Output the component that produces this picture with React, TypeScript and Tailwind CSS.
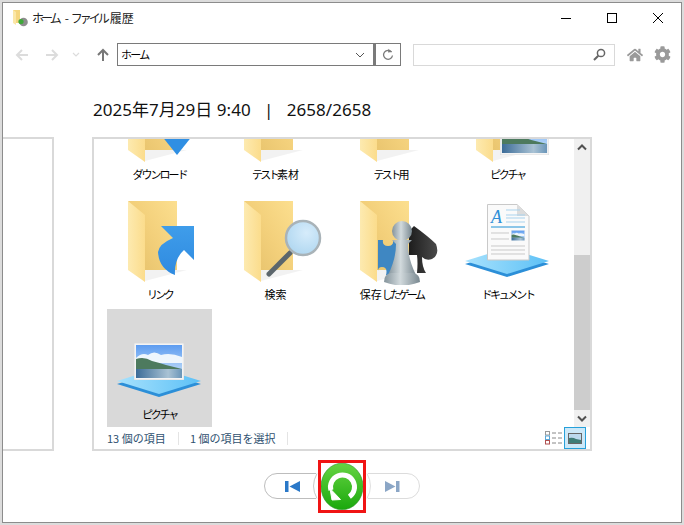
import React from "react";
import { FaHome, FaCog } from "react-icons/fa";

const jp = "font-['Noto_Sans_CJK_JP','Noto_Sans',sans-serif]";

function Defs() {
  return (
    <defs>
      <linearGradient id="back" x1="0" y1="1" x2="1" y2="0">
        <stop offset="0" stopColor="#e2bd66" />
        <stop offset="0.55" stopColor="#f3d07b" />
        <stop offset="1" stopColor="#fcdf8f" />
      </linearGradient>
      <linearGradient id="flap" x1="0" y1="0" x2="1" y2="0">
        <stop offset="0" stopColor="#fdeab0" />
        <stop offset="1" stopColor="#fbdc8c" />
      </linearGradient>
      <linearGradient id="blue" x1="0" y1="0" x2="0" y2="1">
        <stop offset="0" stopColor="#3f9dea" />
        <stop offset="1" stopColor="#2f8ae0" />
      </linearGradient>
      <linearGradient id="plat" x1="0" y1="0" x2="1" y2="0">
        <stop offset="0" stopColor="#a8e2fd" />
        <stop offset="1" stopColor="#5cc0f6" />
      </linearGradient>
      <linearGradient id="sky" x1="0" y1="0" x2="0" y2="1">
        <stop offset="0" stopColor="#5d9cf0" />
        <stop offset="1" stopColor="#cfe6fa" />
      </linearGradient>
      <linearGradient id="lake" x1="0" y1="0" x2="1" y2="0">
        <stop offset="0" stopColor="#3c6c98" />
        <stop offset="0.7" stopColor="#a9c2d4" />
        <stop offset="1" stopColor="#6a95b8" />
      </linearGradient>
      <linearGradient id="chess" x1="0" y1="0" x2="1" y2="0">
        <stop offset="0" stopColor="#84939b" />
        <stop offset="0.45" stopColor="#d2dadd" />
        <stop offset="1" stopColor="#78878f" />
      </linearGradient>
      <linearGradient id="spade" x1="0" y1="0" x2="1" y2="0">
        <stop offset="0" stopColor="#1d1d1d" />
        <stop offset="1" stopColor="#4a4a4a" />
      </linearGradient>
      <radialGradient id="lens" cx="0.6" cy="0.35" r="0.8">
        <stop offset="0" stopColor="#d6ecfb" />
        <stop offset="1" stopColor="#a9d3ee" />
      </radialGradient>
    </defs>
  );
}

function Folder() {
  return (
    <>
      <path d="M38 81 L80 81 L38 92 Z" fill="#000" opacity="0.05" />
      <path d="M21 12 H70 V81 H38 V93 Z" fill="url(#back)" />
      <path d="M21 12 L38 26 V93 L21 81 Z" fill="url(#flap)" />
    </>
  );
}

function Photo({ x, y, w, h }: { x: number; y: number; w: number; h: number }) {
  return (
    <svg x={x} y={y} width={w} height={h} viewBox="0 0 50 37" preserveAspectRatio="none">
      <rect width="50" height="37" fill="#f4f4f4" stroke="#d0d0d0" strokeWidth="0.6" />
      <rect x="2" y="2" width="46" height="33" fill="url(#sky)" />
      <path d="M2 15 Q8 9 14 12 Q20 7 27 12 Q36 9 48 14 V20 H2 Z" fill="#eef6fd" />
      <path d="M2 16 Q10 13 18 18 Q26 20 32 22 L48 26 H2 Z" fill="#4d7a5e" />
      <rect x="2" y="26" width="46" height="9" fill="url(#lake)" />
    </svg>
  );
}

function Platform() {
  const d = "M10 72 L52 59 L94 72 L52 85 Z";
  return (
    <>
      <path d={d} transform="translate(0 3)" fill="#2c8fd8" />
      <path d={d} fill="url(#plat)" />
    </>
  );
}

const icons: Record<string, React.ReactNode> = {
  download: (
    <>
      <Folder />
      <path d="M54 66 H86 L70 86 Z" fill="#2f8fe3" />
    </>
  ),
  plain: <Folder />,
  picFolder: (
    <>
      <Folder />
      <Photo x={45} y={49} w={49} h={37} />
    </>
  ),
  link: (
    <>
      <Folder />
      <path d="M54 37 H87 V71 L77 61 Q67 70 68 86 Q52 80 51 63 Q52 55 66 49 Z" fill="url(#blue)" />
    </>
  ),
  search: (
    <>
      <Folder />
      <line x1="67" y1="64" x2="46" y2="85" stroke="#5c666c" strokeWidth="5" strokeLinecap="round" />
      <circle cx="80" cy="49" r="17" fill="url(#lens)" stroke="#a9b3b8" strokeWidth="2.5" />
    </>
  ),
  game: (
    <>
      <Folder />
      <path d="M39 51 H44 Q43 57 49 57 Q55 57 54 51 H60 V86 H47 Q49 78 43 78 Q39 78 39 82 Z" fill="#3f87c2" />
      <path d="M75 37 Q90 48 97 55 Q101 66 93 70 Q87 72 83 68 Q83 78 87 84 L78 84 Q79 74 78 66 L70 66 V42 Z" fill="url(#spade)" />
      <circle cx="63" cy="42" r="10" fill="url(#chess)" />
      <path d="M53 51 H73 L69 55 Q69 70 77 86 H49 Q57 70 57 55 Z" fill="url(#chess)" />
      <path d="M45 93 Q45 85 52 84 H74 Q81 85 81 93 Q63 100 45 93 Z" fill="url(#chess)" />
    </>
  ),
  doc: (
    <>
      <Platform />
      <path d="M32.5 15.5 H62 L74 27 V71 H32.5 Z" fill="#fafafa" stroke="#c9c9c9" />
      <path d="M62 15.5 V27 H74 Z" fill="#dcdcdc" />
      <text x="36" y="34" fontSize="18" fontStyle="italic" fontFamily="Liberation Serif" fill="#2f8fd8">A</text>
      <path d="M51 21 H65 M51 26 H70 M51 29 H70 M51 33 H70" stroke="#a9d3ee" strokeWidth="1" />
      <rect x="36" y="37" width="34" height="2" fill="#8cc6e8" />
      <path d="M36 44 H54 M36 50 H54 M36 57 H70 M36 61 H70 M36 65 H70" stroke="#c9c9c9" strokeWidth="1" />
      <Photo x={56} y={41} w={14} h={11} />
    </>
  ),
  pic: (
    <>
      <Platform />
      <Photo x={27} y={34} w={50} h={37} />
    </>
  ),
};

const Kana = ({ children }: { children: React.ReactNode }) => <span className="tracking-[-2.7px]">{children}</span>;

const items: { label: React.ReactNode; icon: string; selected?: boolean }[] = [
  { label: <span className="tracking-[-2px]">ダウンロード</span>, icon: "download" },
  { label: <><Kana>テスト</Kana>素材</>, icon: "plain" },
  { label: <><Kana>テスト</Kana>用</>, icon: "plain" },
  { label: <span className="tracking-[-2.2px]">ピクチャ</span>, icon: "picFolder" },
  { label: <span className="tracking-[-2.6px]">リンク</span>, icon: "link" },
  { label: "検索", icon: "search" },
  { label: <>保存<span className="tracking-[-2.6px]">したゲーム</span></>, icon: "game" },
  { label: <span className="tracking-[-2.3px]">ドキュメント</span>, icon: "doc" },
  { label: <span className="tracking-[-2.2px]">ピクチャ</span>, icon: "pic", selected: true },
];

function Tile({ label, icon, selected }: { label: React.ReactNode; icon: string; selected?: boolean }) {
  return (
    <div className={`h-[119px] w-[105px] mb-px flex flex-col items-center ${selected ? "bg-[#d9d9d9]" : ""}`}>
      <svg width="105" height="96" viewBox="0 0 105 96" className="shrink-0">
        <Defs />
        {icons[icon]}
      </svg>
      <span className={`h-[18px] leading-[18px] text-[11px] text-black whitespace-nowrap ${jp}`}>{label}</span>
    </div>
  );
}

function Arrow({ dir, color }: { dir: "l" | "r" | "u"; color: string }) {
  const rot = dir === "l" ? 0 : dir === "r" ? 180 : 90;
  return (
    <svg width="14" height="14" viewBox="0 0 14 14" style={{ transform: `rotate(${rot}deg)` }} fill="none" stroke={color} strokeWidth="2">
      <path d="M13 7 H2 M7 2 L2 7 L7 12" />
    </svg>
  );
}

function Chevron({ up }: { up?: boolean }) {
  return (
    <svg width="16" height="17" viewBox="0 0 16 17" fill="none" stroke="#505050" strokeWidth="2">
      <path d={up ? "M4 10.5 L8 6.5 L12 10.5" : "M4 6.5 L8 10.5 L12 6.5"} />
    </svg>
  );
}

export default function App() {
  return (
    <div className="w-[684px] h-[525px] bg-[#dcdcdc] p-[2px] overflow-hidden">
      <div className={`w-full h-[521px] bg-white border border-[#8c8c8c] flex flex-col ${jp}`}>
        {/* title bar */}
        <div className="h-[30px] flex items-center shrink-0">
          <svg width="18" height="18" viewBox="0 0 18 18" className="ml-[10px]">
            <path d="M0 1 H7 V14 H0 Z" fill="#f5d67f" />
            <path d="M0 1 L3 3 V16 L0 14 Z" fill="#fbe7a8" />
            <circle cx="10.5" cy="13" r="4.3" fill="#8d8d8d" />
            <circle cx="8" cy="12.5" r="2.6" fill="#3fa83a" />
          </svg>
          <span className="text-[12px] text-[#222] ml-px flex items-center whitespace-nowrap">
            <span className="tracking-[-3px]">ホーム</span>
            <span className="ml-[6px] mr-[2px]">-</span>
            <span className="tracking-[-3px]">ファイル</span>
            <span className="ml-[3px]">履歴</span>
          </span>
          <div className="ml-auto flex items-center">
            <div className="w-[46px] flex justify-center">
              <svg width="10" height="10" viewBox="0 0 10 10"><path d="M0 5.5 H10" stroke="#000" /></svg>
            </div>
            <div className="w-[46px] flex justify-center">
              <svg width="10" height="10" viewBox="0 0 10 10"><rect x="0.5" y="0.5" width="9" height="9" fill="none" stroke="#000" /></svg>
            </div>
            <div className="w-[46px] flex justify-center">
              <svg width="10" height="10" viewBox="0 0 10 10"><path d="M0 0 L10 10 M10 0 L0 10" stroke="#000" /></svg>
            </div>
          </div>
        </div>

        {/* toolbar */}
        <div className="h-[23px] mt-[10px] flex items-center shrink-0">
          <div className="ml-[12px] w-[30px] flex"><Arrow dir="l" color="#dcdcdc" /></div>
          <div className="w-[27px] flex"><Arrow dir="r" color="#dcdcdc" /></div>
          <svg width="8" height="6" viewBox="0 0 8 6" fill="none" stroke="#dcdcdc" strokeWidth="1.2"><path d="M1 1 L4 4 L7 1" /></svg>
          <div className="ml-[16px] mr-[7px] flex"><Arrow dir="u" color="#777777" /></div>
          <div className="w-[257px] h-[23px] border border-[#7a7a7a] flex items-center pl-[3px] text-[11px] text-black tracking-[-1.7px]">ホーム</div>
          <div className="w-[27px] h-[23px] -ml-[27px] border-r border-t border-b border-[#7a7a7a] flex items-center justify-center bg-white">
            <svg width="10" height="6" viewBox="0 0 10 6" fill="none" stroke="#555"><path d="M1 1 L5 5 L9 1" /></svg>
          </div>
          <div className="w-[27px] h-[23px] border-2 border-y-1 border-r-1 border-[#7a7a7a] flex items-center justify-center">
            <svg width="12" height="13" viewBox="0 0 12 13" fill="none" stroke="#7a7a7a" strokeWidth="1.3">
              <path d="M9.6 4 A4.5 4.5 0 1 0 10.5 7.5" />
              <path d="M6.5 0.7 L9.8 3.9 L6 4.5" fill="#7a7a7a" stroke="none" />
            </svg>
          </div>
          <div className="w-[202px] h-[22px] ml-[12px] border border-[#d9d9d9] flex items-center justify-end pr-[8px]">
            <svg width="13" height="13" viewBox="0 0 13 13" fill="none" stroke="#666">
              <circle cx="8" cy="5" r="3.6" strokeWidth="1.5" />
              <path d="M5.3 7.7 L1 12" strokeWidth="2" />
            </svg>
          </div>
          <FaHome className="ml-[12px] text-[#9a9a9a]" size={16} />
          <FaCog className="ml-[11px] text-[#9a9a9a]" size={17} />
        </div>

        {/* date */}
        <div className="h-[24px] mt-[32px] pl-[90px] shrink-0 text-[17px] leading-[24px] text-[#111] tracking-[0.03px] font-['Noto_Sans','Noto_Sans_CJK_JP',sans-serif] whitespace-pre">
          2025年7月29日 9:40   |   2658/2658
        </div>

        {/* panels */}
        <div className="h-[314px] mt-[15px] flex shrink-0">
          <div className="w-[51px] mr-[38px] border-y-2 border-r-2 border-[#d9d9d9] shrink-0" />
          <div className="w-[500px] border-2 border-[#d9d9d9] flex flex-col shrink-0">
            <div className="h-[288px] flex shrink-0">
              <div className="flex-1 overflow-hidden pl-[13px]">
                <div className="grid grid-cols-[repeat(4,105px)] gap-x-[11px] -mt-[70px]">
                  {items.map((it, i) => (
                    <Tile key={i} {...it} />
                  ))}
                </div>
              </div>
              <div className="w-[16px] bg-[#f0f0f0] flex flex-col shrink-0">
                <Chevron up />
                <div className="h-[99px]" />
                <div className="h-[155px] bg-[#cdcdcd]" />
                <div className="flex-1" />
                <Chevron />
              </div>
            </div>
            <div className="flex-1 flex items-center pl-[13px] text-[11px] text-[#2f5170]">
              <span className="w-[71px]">13 個の項目</span>
              <span className="w-px h-[13px] bg-[#e4e4e4]" />
              <span className="ml-[11px] w-[97px] whitespace-nowrap">1 個の項目を選択</span>
              <span className="w-px h-[13px] bg-[#e4e4e4]" />
              <div className="ml-auto flex items-center">
                <svg width="18" height="14" viewBox="0 0 18 14" fill="none" className="mr-[1px]">
                  <rect x="0.5" y="0.5" width="4" height="3.5" stroke="#999" />
                  <rect x="0.5" y="5" width="4" height="3.5" stroke="#5aa7d8" />
                  <rect x="0.5" y="9.5" width="4" height="3.5" stroke="#b05050" />
                  <path d="M7 2 H11 M13 2 H17 M7 7 H11 M13 7 H17 M7 12 H11 M13 12 H17" stroke="#888" />
                </svg>
                <div className="w-[22px] h-[22px] mr-[4px] bg-[#cce8f8] border border-[#26a0da] flex items-center justify-center">
                  <svg width="14" height="11" viewBox="0 0 14 11">
                    <rect width="14" height="11" fill="#666" />
                    <rect x="1" y="1" width="12" height="9" fill="#bcd9ee" />
                    <path d="M1 5 Q5 4 8 6 L13 7 V10 H1 Z" fill="#3f7d78" />
                  </svg>
                </div>
              </div>
            </div>
          </div>
        </div>

        {/* playback controls */}
        <div className="flex-1 flex justify-center items-center pb-[1px]">
          <button className="w-[54px] h-[28px]">
            <svg width="54" height="28" viewBox="0 0 54 28" fill="none" className="block">
              <path d="M52 1.5 H13 A12.5 12.5 0 0 0 13 26.5 H52" stroke="#bdbdbd" />
              <path d="M53 1.5 Q46 14 53 26.5" stroke="#c8c8c8" />
              <rect x="21" y="9" width="3.5" height="11" fill="#2a78c8" />
              <path d="M36 9 V20 L25.5 14.5 Z" fill="#2a78c8" />
            </svg>
          </button>
          <div className="w-[48px] h-[53px] border-[3px] border-[#f01414] flex items-center justify-center shrink-0">
            <svg width="42" height="47" viewBox="0 0 42 47" className="shrink-0">
              <defs>
                <linearGradient id="green" x1="0" y1="0" x2="0" y2="1">
                  <stop offset="0" stopColor="#66d443" />
                  <stop offset="1" stopColor="#1aa80c" />
                </linearGradient>
              </defs>
              <ellipse cx="21" cy="23.5" rx="21" ry="23.3" fill="url(#green)" stroke="#2f8f28" strokeWidth="0.6" />
              <path d="M28.4 33.8 A12 12 0 1 0 9.9 27.1" fill="none" stroke="#fff" strokeWidth="5" />
              <path d="M9 25.5 L19.5 36.5 L11 37 Z" fill="#fff" stroke="#fff" strokeWidth="1" />
            </svg>
          </div>
          <button className="w-[54px] h-[28px]">
            <svg width="54" height="28" viewBox="0 0 54 28" fill="none" className="block">
              <path d="M2 1.5 H41 A12.5 12.5 0 0 1 41 26.5 H2" stroke="#dcdcdc" />
              <path d="M1 1.5 Q8 14 1 26.5" stroke="#e0e0e0" />
              <path d="M19 9 V20 L29.5 14.5 Z" fill="#8ba6c6" />
              <rect x="30" y="9" width="3.5" height="11" fill="#8ba6c6" />
            </svg>
          </button>
        </div>
      </div>
    </div>
  );
}
